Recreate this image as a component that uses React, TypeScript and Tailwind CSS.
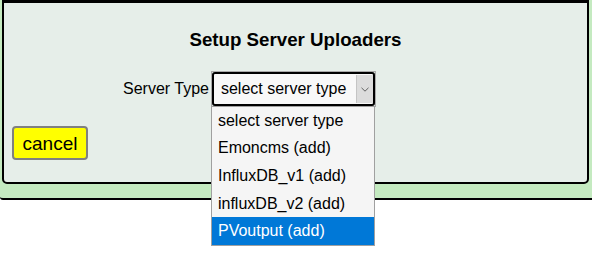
import React from "react";

const OPTIONS = [
  "select server type",
  "Emoncms (add)",
  "InfluxDB_v1 (add)",
  "influxDB_v2 (add)",
  "PVoutput (add)",
];

export default function App() {
  const highlighted = 4;

  return (
    <div className="w-[592px] h-[253px] bg-white overflow-hidden text-black font-['Liberation_Sans',Arial,sans-serif]">
      {/* green outer frame, top is scrolled off */}
      <div className="h-[200px] bg-[#c4eac0] border-b-2 border-black rounded-bl-[3px] pl-[2px] pr-[3px]">
        {/* setup panel */}
        <div className="relative h-[184px] bg-[#e6eee9] border-2 border-t-[3px] border-black rounded-b-[5px]">
          <h3 className="pt-[26px] text-center font-bold text-[18.72px] leading-[22px]">
            Setup Server Uploaders
          </h3>

          <div className="mt-[20px] flex items-center pl-[119px]">
            <span className="text-[16px] leading-none mr-[2px]">Server Type</span>

            <div className="relative w-[165px] h-[36px] border border-[#a9a9a9]">
              <div className="h-full flex items-stretch border-2 border-black rounded-[3px] bg-[#f8f8f8]">
                <span className="flex-1 flex items-center pl-[7px] text-[16px] leading-none">
                  select server type
                </span>
                <span className="w-[17px] my-[1px] flex items-center justify-center bg-[#dcdcdc] border-l border-[#c4c4c4]">
                  <svg width="8" height="5" viewBox="0 0 8 5">
                    <path d="M0.5 0.8 L4 4.2 L7.5 0.8" fill="none" stroke="#606060" strokeWidth="1" />
                  </svg>
                </span>
              </div>

              {/* open dropdown list */}
              <ul className="absolute z-10 left-[-1px] top-[34px] w-[164px] border border-[#a0a0a0] bg-[#f5f5f5]">
                {OPTIONS.map((opt, i) => (
                  <li
                    key={opt}
                    className={
                      i === highlighted
                        ? "h-[27.6px] flex items-center pl-[6px] text-[16px] leading-none bg-[#0078d7] text-white"
                        : "h-[27.6px] flex items-center pl-[6px] text-[16px] leading-none"
                    }
                  >
                    {opt}
                  </li>
                ))}
              </ul>
            </div>
          </div>

          <button className="ml-[8px] mt-[19px] w-[76px] h-[34px] bg-[#ffff00] border-2 border-[#808080] rounded-[4px] text-[19px] leading-none">
            cancel
          </button>
        </div>
      </div>
    </div>
  );
}
